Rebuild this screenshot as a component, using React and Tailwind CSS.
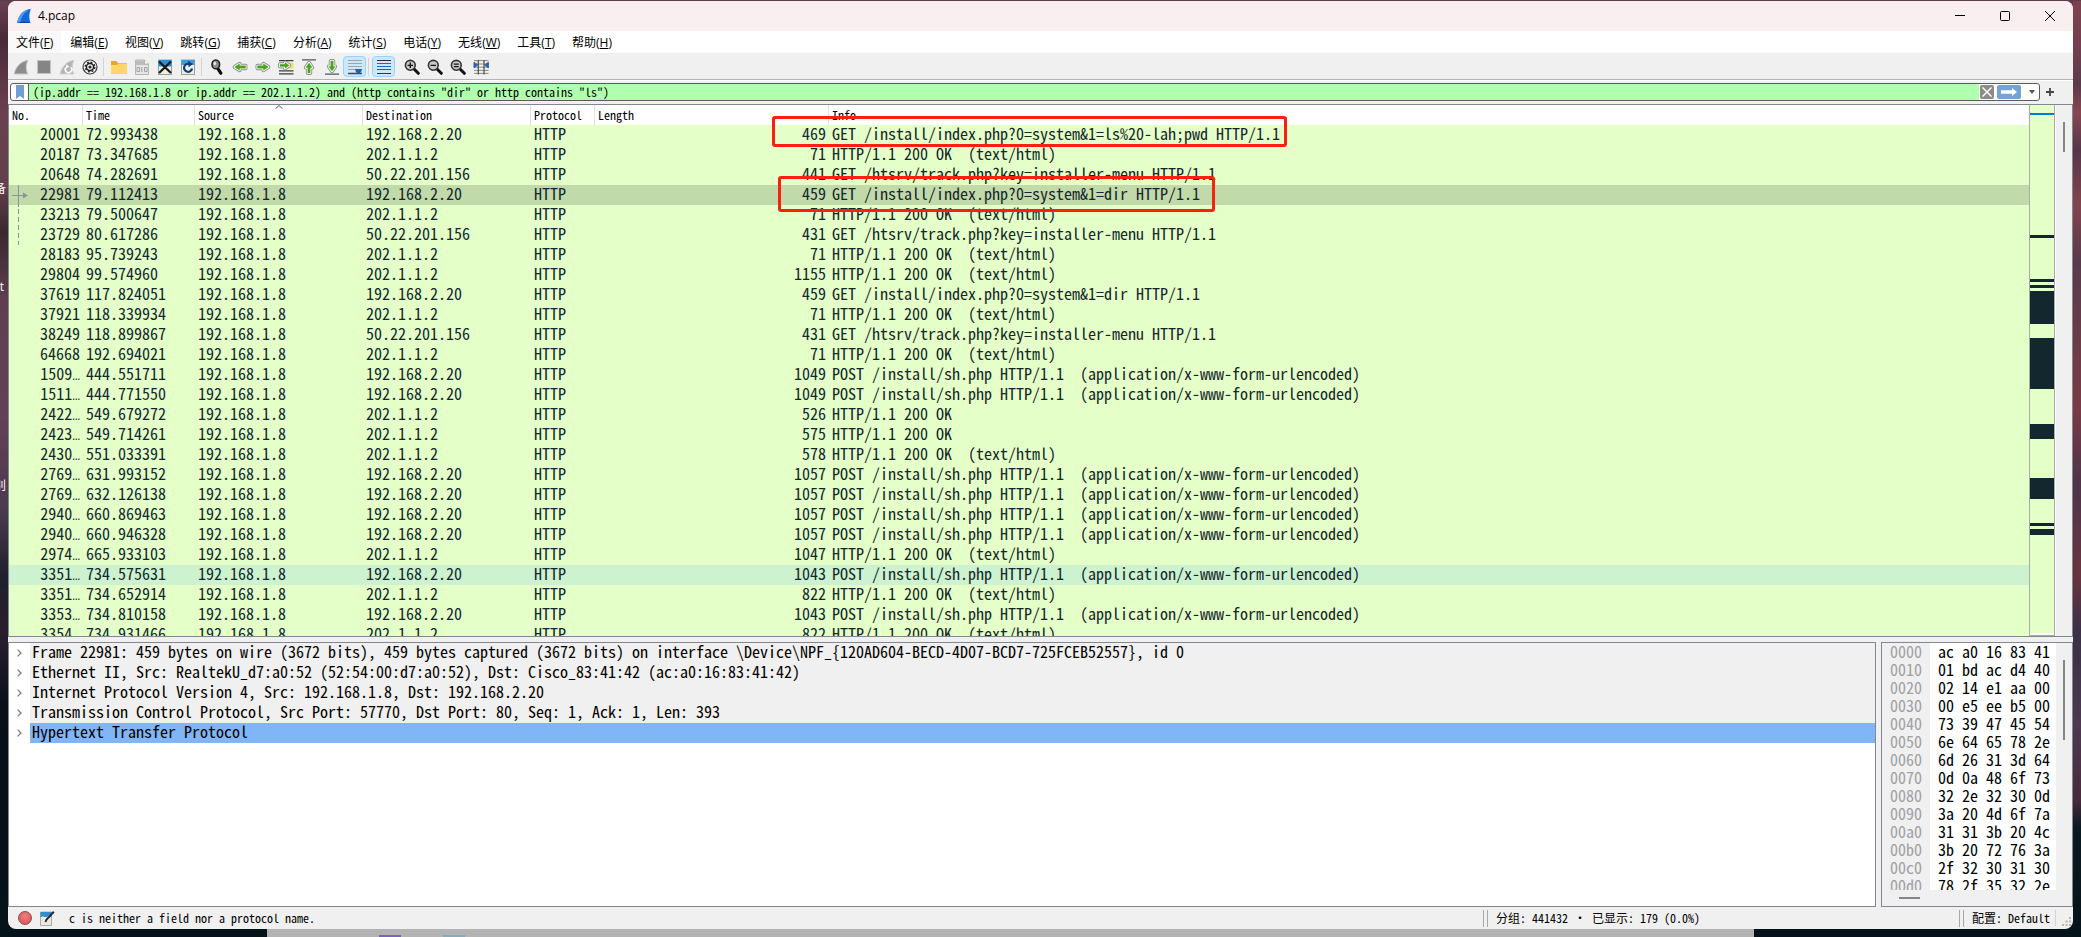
import React from 'react';

const packets = [
  ['20001', '72.993438', '192.168.2.20', '469', 'GET /install/index.php?0=system&1=ls%20-lah;pwd HTTP/1.1'],
  ['20187', '73.347685', '202.1.1.2', '71', 'HTTP/1.1 200 OK  (text/html)'],
  ['20648', '74.282691', '50.22.201.156', '441', 'GET /htsrv/track.php?key=installer-menu HTTP/1.1'],
  ['22981', '79.112413', '192.168.2.20', '459', 'GET /install/index.php?0=system&1=dir HTTP/1.1'],
  ['23213', '79.500647', '202.1.1.2', '71', 'HTTP/1.1 200 OK  (text/html)'],
  ['23729', '80.617286', '50.22.201.156', '431', 'GET /htsrv/track.php?key=installer-menu HTTP/1.1'],
  ['28183', '95.739243', '202.1.1.2', '71', 'HTTP/1.1 200 OK  (text/html)'],
  ['29804', '99.574960', '202.1.1.2', '1155', 'HTTP/1.1 200 OK  (text/html)'],
  ['37619', '117.824051', '192.168.2.20', '459', 'GET /install/index.php?0=system&1=dir HTTP/1.1'],
  ['37921', '118.339934', '202.1.1.2', '71', 'HTTP/1.1 200 OK  (text/html)'],
  ['38249', '118.899867', '50.22.201.156', '431', 'GET /htsrv/track.php?key=installer-menu HTTP/1.1'],
  ['64668', '192.694021', '202.1.1.2', '71', 'HTTP/1.1 200 OK  (text/html)'],
  ['1509…', '444.551711', '192.168.2.20', '1049', 'POST /install/sh.php HTTP/1.1  (application/x-www-form-urlencoded)'],
  ['1511…', '444.771550', '192.168.2.20', '1049', 'POST /install/sh.php HTTP/1.1  (application/x-www-form-urlencoded)'],
  ['2422…', '549.679272', '202.1.1.2', '526', 'HTTP/1.1 200 OK'],
  ['2423…', '549.714261', '202.1.1.2', '575', 'HTTP/1.1 200 OK'],
  ['2430…', '551.033391', '202.1.1.2', '578', 'HTTP/1.1 200 OK  (text/html)'],
  ['2769…', '631.993152', '192.168.2.20', '1057', 'POST /install/sh.php HTTP/1.1  (application/x-www-form-urlencoded)'],
  ['2769…', '632.126138', '192.168.2.20', '1057', 'POST /install/sh.php HTTP/1.1  (application/x-www-form-urlencoded)'],
  ['2940…', '660.869463', '192.168.2.20', '1057', 'POST /install/sh.php HTTP/1.1  (application/x-www-form-urlencoded)'],
  ['2940…', '660.946328', '192.168.2.20', '1057', 'POST /install/sh.php HTTP/1.1  (application/x-www-form-urlencoded)'],
  ['2974…', '665.933103', '202.1.1.2', '1047', 'HTTP/1.1 200 OK  (text/html)'],
  ['3351…', '734.575631', '192.168.2.20', '1043', 'POST /install/sh.php HTTP/1.1  (application/x-www-form-urlencoded)'],
  ['3351…', '734.652914', '202.1.1.2', '822', 'HTTP/1.1 200 OK  (text/html)'],
  ['3353…', '734.810158', '192.168.2.20', '1043', 'POST /install/sh.php HTTP/1.1  (application/x-www-form-urlencoded)'],
  ['3354…', '734.931466', '202.1.1.2', '822', 'HTTP/1.1 200 OK  (text/html)'],
];

const SELECTED = 3;
const HOVERED = 22;

const details = [
  'Frame 22981: 459 bytes on wire (3672 bits), 459 bytes captured (3672 bits) on interface \\Device\\NPF_{120AD604-BECD-4D07-BCD7-725FCEB52557}, id 0',
  'Ethernet II, Src: RealtekU_d7:a0:52 (52:54:00:d7:a0:52), Dst: Cisco_83:41:42 (ac:a0:16:83:41:42)',
  'Internet Protocol Version 4, Src: 192.168.1.8, Dst: 192.168.2.20',
  'Transmission Control Protocol, Src Port: 57770, Dst Port: 80, Seq: 1, Ack: 1, Len: 393',
  'Hypertext Transfer Protocol',
];

const hexRows = [
  ['0000', 'ac a0 16 83 41'],
  ['0010', '01 bd ac d4 40'],
  ['0020', '02 14 e1 aa 00'],
  ['0030', '00 e5 ee b5 00'],
  ['0040', '73 39 47 45 54'],
  ['0050', '6e 64 65 78 2e'],
  ['0060', '6d 26 31 3d 64'],
  ['0070', '0d 0a 48 6f 73'],
  ['0080', '32 2e 32 30 0d'],
  ['0090', '3a 20 4d 6f 7a'],
  ['00a0', '31 31 3b 20 4c'],
  ['00b0', '3b 20 72 76 3a'],
  ['00c0', '2f 32 30 31 30'],
  ['00d0', '78 2f 35 32 2e'],
];

const menus = [
  ['文件', 'F'],
  ['编辑', 'E'],
  ['视图', 'V'],
  ['跳转', 'G'],
  ['捕获', 'C'],
  ['分析', 'A'],
  ['统计', 'S'],
  ['电话', 'Y'],
  ['无线', 'W'],
  ['工具', 'T'],
  ['帮助', 'H'],
];

// [y, height] of the dark bands in the scroll minimap
const bands = [
  [130, 3], [174, 3], [180, 3], [186, 33], [233, 51], [319, 15], [373, 20], [417, 3], [423, 6],
];

function Icon({ children }) {
  return (
    <svg viewBox="0 0 16 16" className="w-4 h-4 shrink-0" fill="none" aria-hidden="true">
      {children}
    </svg>
  );
}

function Magnifier({ children }) {
  return (
    <Icon>
      <path d="M9.5 9.5 14.3 14.3" stroke="#111" strokeWidth="3" strokeLinecap="round" />
      <circle cx="6.3" cy="6.3" r="4.9" fill="#c9c9c9" stroke="#333" strokeWidth="1.6" />
      <g stroke="#111" strokeWidth="1.3">{children}</g>
    </Icon>
  );
}

const RIGHT_ARROW = 'M2.5 6.8H8.5V4.8L13.3 8 8.5 11.2V9.2H2.5Z';
const UP_ARROW = 'M6.8 14V8.6H4.8L8 4 11.2 8.6H9.2V14Z';

function GreenArrow({ d, transform }) {
  return (
    <g transform={transform} strokeLinejoin="round">
      <path d={d} stroke="#8b8b8b" strokeWidth="4" />
      <path d={d} stroke="#fff" strokeWidth="2.2" />
      <path d={d} fill="#47a51a" stroke="#47a51a" strokeWidth=".4" />
    </g>
  );
}

const tools = [
  {
    label: '开始捕获',
    icon: <Icon><path d="M1 15C3 8 7 2.5 15 1.2 12.6 5.5 12.8 11 14.8 15Z" fill="#8c8c8c" stroke="#c8c8c8" /></Icon>,
  },
  {
    label: '停止捕获',
    icon: <Icon><rect x="1.5" y="1.5" width="13" height="13" fill="#858585" stroke="#c3c3c3" /></Icon>,
  },
  {
    label: '重新开始',
    icon: (
      <Icon>
        <path d="M1 15C3 8 7 2.5 15 1.2 12.6 5.5 12.8 11 14.8 15Z" fill="#b3b3b3" stroke="#cfcfcf" />
        <path d="M11.8 8.2A3.2 3.2 0 1 1 7 8.4" stroke="#fff" strokeWidth="1.6" />
        <path d="M7.2 5.6 10.3 7.5 7 9.6Z" fill="#fff" />
      </Icon>
    ),
  },
  {
    label: '捕获选项',
    icon: (
      <Icon>
        <circle cx="8" cy="8" r="7" fill="#fff" stroke="#3c3c3c" strokeWidth="1.2" />
        <circle cx="8" cy="8" r="3.6" stroke="#222" strokeWidth="1.6" />
        <circle cx="8" cy="8" r="4.9" stroke="#222" strokeWidth="1.3" strokeDasharray="2 1.85" />
        <circle cx="8" cy="8" r="1.6" fill="#222" />
      </Icon>
    ),
  },
  'separator',
  {
    label: '打开',
    icon: (
      <Icon>
        <path d="M0 2H5.5L7 4H16V14.5H0Z" fill="#e9a91d" />
        <path d="M0 6H6L7.5 4.6H16V14.5H0Z" fill="#ffd667" />
      </Icon>
    ),
  },
  {
    label: '保存',
    icon: (
      <Icon>
        <path d="M1.5 1H10.5L14.5 5V15.5H1.5Z" fill="#e4e4e4" stroke="#b5b5b5" />
        <path d="M2 1.5H10L14 5V6H2Z" fill="#bcbcbc" />
        <path d="M10.5 1V5H14.5" fill="#fff" stroke="#b5b5b5" />
        <path d="M3 8.5H5.5V12.5H3ZM7.8 8V13M10.5 8.5H13V12.5H10.5Z" stroke="#a3a3a3" />
      </Icon>
    ),
  },
  {
    label: '关闭',
    icon: (
      <Icon>
        <rect x="1.5" y="1" width="13" height="14.5" fill="#eef0e6" stroke="#9d9d95" />
        <path d="M1.5 1H14.5V7.5H1.5Z" fill="#2e8fd0" />
        <path d="M2 2.5 14 14M14 2.5 2 14" stroke="#1b1b1b" strokeWidth="2.4" />
      </Icon>
    ),
  },
  {
    label: '重新加载',
    icon: (
      <Icon>
        <rect x="1.5" y="1" width="13" height="14.5" fill="#eef0e6" stroke="#9d9d95" />
        <path d="M1.5 1H14.5V6H1.5Z" fill="#3f9ad6" />
        <path d="M12 9.5A4 4 0 1 1 9 4.9" stroke="#123f7c" strokeWidth="2.2" />
        <path d="M8 1.8 13 5 8.6 8.2Z" fill="#123f7c" />
      </Icon>
    ),
  },
  'separator',
  {
    label: '查找',
    icon: (
      <Icon>
        <path d="M8.5 9 11.8 14.2" stroke="#0d0d0d" strokeWidth="3.2" strokeLinecap="round" />
        <ellipse cx="6.8" cy="5.4" rx="3.8" ry="4.4" fill="#8d8d8d" stroke="#1f1f1f" strokeWidth="1.6" />
        <ellipse cx="5.8" cy="4.4" rx="1.3" ry="1.8" fill="#e4e4e4" />
      </Icon>
    ),
  },
  { label: '后退', icon: <Icon><GreenArrow d={RIGHT_ARROW} transform="rotate(180 8 8)" /></Icon> },
  { label: '前进', icon: <Icon><GreenArrow d={RIGHT_ARROW} /></Icon> },
  {
    label: '转到分组',
    icon: (
      <Icon>
        <path d="M1 1.7H15.5M1 11.8H15.5M1 14.8H15.5" stroke="#3c3c3c" strokeWidth="1.3" />
        <path d="M8 5H15.5M8 8H15.5" stroke="#efe26a" strokeWidth="3" />
        <GreenArrow d="M2 5.3H7V3.5L11.2 6.4 7 9.3V7.5H2Z" />
      </Icon>
    ),
  },
  {
    label: '首个分组',
    icon: <Icon><path d="M1 .8H15" stroke="#555" strokeWidth="1.3" /><GreenArrow d={UP_ARROW} /></Icon>,
  },
  {
    label: '末个分组',
    icon: <Icon><path d="M1 15.2H15" stroke="#555" strokeWidth="1.3" /><GreenArrow d={UP_ARROW} transform="rotate(180 8 8)" /></Icon>,
  },
  {
    label: '自动滚动',
    active: true,
    icon: (
      <Icon>
        <path d="M1 1.5H15M1 4.5H15M1 7.5H15M1 10.5H15" stroke="#a5a5a0" strokeWidth="1.2" />
        <path d="M1 14.5H15" stroke="#444" strokeWidth="1.3" />
        <path d="M8 10H15L14 13.2 11.5 14.8 9 13.2Z" fill="#2c5f9e" />
      </Icon>
    ),
  },
  'separator',
  {
    label: '着色',
    active: true,
    icon: (
      <Icon>
        <path d="M1 1.5H15" stroke="#333" strokeWidth="1.2" />
        <path d="M1 4.5H15" stroke="#ec1c24" strokeWidth="1.2" />
        <path d="M1 7.5H15" stroke="#2d62b8" strokeWidth="1.2" />
        <path d="M1 10.5H15" stroke="#6d3d8c" strokeWidth="1.2" />
        <path d="M1 14.5H15" stroke="#333" strokeWidth="1.2" />
      </Icon>
    ),
  },
  'gap',
  { label: '放大', icon: <Magnifier><path d="M3.6 6.3H9M6.3 3.6V9" /></Magnifier> },
  { label: '缩小', icon: <Magnifier><path d="M3.6 6.3H9" /></Magnifier> },
  { label: '正常大小', icon: <Magnifier><path d="M3.8 5.1H8.8M3.8 7.6H8.8" /></Magnifier> },
  {
    label: '调整列宽',
    icon: (
      <Icon>
        <path d="M1 1.6H15.5M1 5H15.5M1 8.2H15.5M1 11.4H15.5M1 14.4H15.5" stroke="#8b8b85" />
        <path d="M5.3 1V15.5M11 1V15.5" stroke="#4c4c48" strokeWidth="1.2" />
        <path d="M1 3.2 4.8 6 1 8.8ZM15.4 3.2 11.6 6 15.4 8.8Z" fill="#2f62a8" stroke="#2f62a8" />
      </Icon>
    ),
  },
];

function TitleBar() {
  return (
    <header className="h-[30px] shrink-0 bg-[#f9eff1] flex items-center">
      <svg viewBox="0 0 16 16" className="w-4 h-4 ml-2" aria-hidden="true">
        <path d="M1 15C2.5 8 6 2 15 .8 12.8 5.5 13 11 14.6 15Z" fill="#1668d8" />
        <path d="M1 15C2.5 8 6 2 15 .8 8 4 5 9 4.5 15Z" fill="#4d9bf5" />
        <path d="M1 15Q8 12.6 14.6 15Z" fill="#0b3f9c" />
      </svg>
      <h1 className="ml-1.5 flex-1 font-['Open_Sans',sans-serif] text-xs">4.pcap</h1>
      <div className="flex pr-px">
        <button aria-label="最小化" className="w-[45px] h-[30px] flex items-center justify-center">
          <svg viewBox="0 0 10 10" className="w-2.5 h-2.5" stroke="#000"><path d="M0 4.5H10" /></svg>
        </button>
        <button aria-label="最大化" className="w-[45px] h-[30px] flex items-center justify-center">
          <svg viewBox="0 0 10 10" className="w-2.5 h-2.5" fill="none" stroke="#000"><rect x=".5" y=".5" width="9" height="9" rx="1" /></svg>
        </button>
        <button aria-label="关闭窗口" className="w-[45px] h-[30px] flex items-center justify-center">
          <svg viewBox="0 0 10 10" className="w-2.5 h-2.5" stroke="#000"><path d="M0 0 10 10M10 0 0 10" /></svg>
        </button>
      </div>
    </header>
  );
}

function MenuBar() {
  return (
    <nav className="h-[22px] shrink-0 bg-white flex gap-px font-['Open_Sans','Noto_Sans_CJK_SC',sans-serif] text-xs">
      {menus.map(([name, key], i) => (
        <button key={key} className={`px-2 pt-0.5 h-full whitespace-nowrap ${i === 0 ? 'bg-[#f9f9f9]' : ''}`}>
          {name}(<span className="underline">{key}</span>)
        </button>
      ))}
    </nav>
  );
}

function Toolbar() {
  return (
    <div className="h-[27px] shrink-0 flex items-center pl-px border-t border-b border-t-[#eeeeee] border-b-[#b4b4b4]">
      {tools.map((tool, i) => {
        if (tool === 'separator') return <span key={i} className="w-px h-[18px] ml-0.5 mr-[3px] bg-[#d3d3d3]" />;
        if (tool === 'gap') return <span key={i} className="w-[5px]" />;
        return (
          <button
            key={i}
            aria-label={tool.label}
            className={`w-[23px] h-[21px] flex items-center justify-center rounded-sm ${tool.active ? 'bg-[#cce8ff] border border-[#99d1ff]' : ''}`}
          >
            {tool.icon}
          </button>
        );
      })}
    </div>
  );
}

function FilterBar() {
  return (
    <div className="h-6 shrink-0 flex items-center border-t border-white pl-0.5 pb-px">
      <div className="flex-1 h-[18px] flex items-center bg-white border border-[#5c5c5c] rounded-[3px] overflow-hidden">
        <button aria-label="书签" className="w-[18px] h-full flex items-center justify-center border-r border-[#5c5c5c]">
          <svg viewBox="0 0 8 14" className="w-2 h-3.5"><path d="M0 0H8V14L4 11 0 14Z" fill="#719fd3" /></svg>
        </button>
        <input
          aria-label="显示过滤器"
          className="flex-1 min-w-0 h-full pl-1 pb-px bg-[#afffaf] text-black outline-none font-['Noto_Sans_Mono_CJK_SC','Liberation_Mono',monospace] text-xs"
          defaultValue={'(ip.addr == 192.168.1.8 or ip.addr == 202.1.1.2) and (http contains "dir" or http contains "ls")'}
        />
        <button aria-label="清除" className="ml-px w-3.5 h-3.5 bg-[#8a8c88] rounded-xs flex items-center justify-center">
          <svg viewBox="0 0 10 10" className="w-2.5 h-2.5" stroke="#fff" strokeWidth="1.5"><path d="M.5 .5 9.5 9.5M9.5 .5 .5 9.5" /></svg>
        </button>
        <button aria-label="应用" className="ml-[3px] w-6 h-3.5 bg-[#75a3d5] rounded-xs flex items-center justify-center">
          <svg viewBox="0 0 16 8" className="w-4 h-2"><path d="M0 2.2H11V0L16 4 11 8V5.8H0Z" fill="#fff" /></svg>
        </button>
        <button aria-label="历史" className="w-[18px] h-full flex items-center justify-center pl-1">
          <svg viewBox="0 0 6 4" className="w-1.5 h-1"><path d="M0 0H6L3 4Z" fill="#555" /></svg>
        </button>
      </div>
      <button aria-label="添加过滤器按钮" className="w-[33px] h-full flex items-center pl-1.5">
        <svg viewBox="0 0 8 8" className="w-2 h-2" stroke="#444" strokeWidth="1.8"><path d="M0 4H8M4 0V8" /></svg>
      </button>
    </div>
  );
}

function HeaderCell({ children, sorted }) {
  return (
    <th className="relative h-5 px-[3px] text-left font-normal border-r border-[#e2e2e2] last:border-r-0">
      {sorted && (
        <svg viewBox="0 0 8 4" className="absolute top-0 left-1/2 -ml-1 w-2 h-1" fill="none" stroke="#555"><path d="M.5 3.8 4 .5 7.5 3.8" /></svg>
      )}
      {children}
    </th>
  );
}

function PacketNumber({ value }) {
  if (!value.endsWith('…')) return value;
  return (
    <>
      {value.slice(0, -1)}
      <span className="font-['Liberation_Mono',monospace] text-[13px] leading-0">…</span>
    </>
  );
}

function PacketList() {
  return (
    <section className="flex-[2] min-h-0 flex border border-[#828790] bg-[#e4ffc7]">
      <div className="relative flex-1 min-w-0 overflow-hidden">
        <table className="w-full table-fixed border-separate border-spacing-0 text-[#12272e]">
          <colgroup>
            <col className="w-[74px]" />
            <col className="w-28" />
            <col className="w-[168px]" />
            <col className="w-[168px]" />
            <col className="w-16" />
            <col className="w-[234px]" />
            <col />
          </colgroup>
          <thead className="bg-white text-black font-['Noto_Sans_Mono_CJK_SC','Liberation_Mono',monospace] text-xs">
            <tr>
              <HeaderCell>No.</HeaderCell>
              <HeaderCell>Time</HeaderCell>
              <HeaderCell sorted>Source</HeaderCell>
              <HeaderCell>Destination</HeaderCell>
              <HeaderCell>Protocol</HeaderCell>
              <HeaderCell>Length</HeaderCell>
              <HeaderCell>Info</HeaderCell>
            </tr>
          </thead>
          <tbody className="font-['Noto_Sans_Mono_CJK_SC','Liberation_Mono',monospace] text-base leading-4 whitespace-pre">
            {packets.map(([no, time, destination, length, info], i) => (
              <tr key={i} className={i === SELECTED ? 'bg-[#c2d9a9]' : i === HOVERED ? 'bg-[#cdf2cf]' : ''}>
                <td className="relative h-5 px-[3px] pb-1 text-right">
                  {i === SELECTED && (
                    <svg viewBox="0 0 20 60" className="absolute top-0 left-0 w-5 h-[60px]" fill="none" stroke="#8a949c">
                      <path d="M9.5 0V22M3 10.5H15" />
                      <path d="M9.5 24V60" strokeDasharray="5 3" />
                      <path d="M14 7.5 19 10.5 14 13.5Z" fill="#8a949c" stroke="none" />
                    </svg>
                  )}
                  <PacketNumber value={no} />
                </td>
                <td className="h-5 px-[3px] pb-1">{time}</td>
                <td className="h-5 px-[3px] pb-1">192.168.1.8</td>
                <td className="h-5 px-[3px] pb-1">{destination}</td>
                <td className="h-5 px-[3px] pb-1">HTTP</td>
                <td className="h-5 px-[3px] pb-1 text-right">{length}</td>
                <td className="h-5 px-[3px] pb-1">{info}</td>
              </tr>
            ))}
          </tbody>
        </table>
        {/* Highlight marks over the two interesting requests */}
        <div className="absolute left-[763px] top-[11px] w-[515px] h-[31px] border-3 border-[#ff1f10] rounded-[3px]" />
        <div className="absolute left-[769px] top-[71px] w-[437px] h-9 border-3 border-[#ff1f10] rounded-[3px]" />
      </div>
      <div className="w-[26px] border-x border-b border-[#a9a9a9] bg-white pb-0.5">
        <svg viewBox="0 0 24 527" preserveAspectRatio="none" className="block w-full h-full" shapeRendering="crispEdges">
          <rect width="24" height="527" fill="#e4ffc7" />
          <rect y="8" width="24" height="2" fill="#0078d7" />
          {bands.map(([y, h]) => (
            <rect key={y} y={y} width="24" height={h} fill="#12272e" />
          ))}
        </svg>
      </div>
      <div className="w-[17px] bg-[#f0f0f0] border-l border-white pt-[17px] pl-[7px]">
        <div className="w-0.5 h-[30px] bg-[#868686]" />
      </div>
    </section>
  );
}

function PacketDetails() {
  return (
    <section className="flex-1 min-w-0 bg-white border border-[#828790] overflow-hidden">
      <ul className="font-['Noto_Sans_Mono_CJK_SC','Liberation_Mono',monospace] text-base leading-4">
        {details.map((line, i) => (
          <li key={line} className="flex h-5">
            <button aria-label="展开" className="w-[21px] shrink-0 flex items-center justify-center">
              <svg viewBox="0 0 5 8" className="w-[5px] h-2" fill="none" stroke="#7a7a7a" strokeWidth="1.3"><path d="M.6 .6 4 4 .6 7.4" /></svg>
            </button>
            <span className={`flex-1 pl-0.5 pb-1 text-black whitespace-pre ${i === 4 ? 'bg-[#80b6f8]' : 'bg-[#f0f0f0]'}`}>
              {line}
            </span>
          </li>
        ))}
      </ul>
    </section>
  );
}

function PacketBytes() {
  return (
    <section className="w-48 shrink-0 flex flex-col bg-[#f0f0f0] border border-[#828790]">
      <div className="flex-1 min-h-0 flex">
        <div className="flex-1 overflow-hidden bg-[linear-gradient(to_right,#f0f0f0_48px,#ffffff_48px)]">
          <table className="font-['Noto_Sans_Mono_CJK_SC','Liberation_Mono',monospace] text-base leading-4">
            <tbody>
              {hexRows.map(([offset, bytes]) => (
                <tr key={offset}>
                  <td className="w-12 pl-2 pb-0.5 text-[#a0a0a0]">{offset}</td>
                  <td className="pl-2 pb-0.5 text-black whitespace-nowrap">{bytes}</td>
                </tr>
              ))}
            </tbody>
          </table>
        </div>
        <div className="w-4 pt-[17px] pl-[7px]">
          <div className="w-0.5 h-20 bg-[#868686]" />
        </div>
      </div>
      <div className="h-4 shrink-0 pt-[7px] pl-[17px]">
        <div className="w-[21px] h-0.5 bg-[#868686]" />
      </div>
    </section>
  );
}

function Handle() {
  return <span className="w-[5px] h-[17px] shrink-0 border-x border-[#a8a8a8]" />;
}

function StatusBar() {
  return (
    <footer className="h-[22px] shrink-0 flex items-center text-black font-['Noto_Sans_Mono_CJK_SC','Liberation_Mono',monospace] text-xs whitespace-pre">
      <button aria-label="专家信息" className="ml-2.5 w-3.5 h-3.5 rounded-full border border-[#8f4a4a] bg-[radial-gradient(circle_at_50%_35%,#f08080,#d84a50)]" />
      <button aria-label="捕获文件注释" className="ml-2">
        <svg viewBox="0 0 15 15" className="w-[15px] h-[15px]" fill="none">
          <path d="M.5 1H11.5V14.5H.5Z" fill="#e9e9e2" stroke="#aaa" />
          <path d="M.5 1H11.5V6H.5Z" fill="#2e8fd0" />
          <path d="M2.5 5.5 6 8 9 4.5" stroke="#fff" />
          <path d="M13.8 .8 6.5 8.5 5.5 11" stroke="#2b2b2b" strokeWidth="2" />
        </svg>
      </button>
      <span className="ml-3.5 flex-1">c is neither a field nor a protocol name.</span>
      <div className="w-[476px] flex items-center">
        <Handle />
        <span className="ml-2">分组: 441432 · 已显示: 179 (0.0%)</span>
      </div>
      <Handle />
      <span className="ml-2 pr-[5px] border-r border-[#d3d3d3]">配置: Default</span>
      <svg viewBox="0 0 9 9" className="ml-1.5 mr-0.5 mt-1.5 w-[9px] h-[9px]" fill="#b5b5b5">
        <path d="M7 0H9V2H7ZM7 3.5H9V5.5H7ZM3.5 3.5H5.5V5.5H3.5ZM7 7H9V9H7ZM3.5 7H5.5V9H3.5ZM0 7H2V9H0Z" />
      </svg>
    </footer>
  );
}

export default function App() {
  return (
    <div className="h-screen flex flex-col overflow-hidden bg-[#5a3a48]">
      <div className="flex-1 min-h-0 flex pt-px bg-[linear-gradient(to_bottom,#5f3c4c_0%,#5e3c4a_40%,#0c1620_80%,#07121a_100%)]">
        {/* Desktop wallpaper with icon captions peeking out on the left */}
        <div className="relative w-2 shrink-0 overflow-hidden text-white text-xs leading-4 font-['Open_Sans','Noto_Sans_CJK_SC',sans-serif] bg-[linear-gradient(to_bottom,#6b4152_0%,#4a2a38_4%,#6a4050_12%,#62404e_20%,#3a2830_25%,#5e3e50_32%,#64405a_45%,#4a3a50_55%,#20202e_62%,#2a1e30_68%,#0a0f18_76%,#07121a_100%)]">
          <span className="absolute right-0.5 top-[180px]">备</span>
          <span className="absolute right-1 top-[278px]">t</span>
          <span className="absolute right-0.5 top-[477px]">别</span>
        </div>
        <div className="flex-1 min-w-0 flex flex-col bg-[#f0f0f0] rounded-lg overflow-hidden text-black">
          <TitleBar />
          <MenuBar />
          <Toolbar />
          <FilterBar />
          <main className="flex-1 min-h-0 flex flex-col gap-[5px]">
            <PacketList />
            <div className="flex-1 min-h-0 flex gap-[5px]">
              <PacketDetails />
              <PacketBytes />
            </div>
          </main>
          <StatusBar />
        </div>
        <div className="w-2 shrink-0 bg-[linear-gradient(to_bottom,#80414f_0%,#743f50_5%,#5a3a4c_9%,#8a4650_12%,#56364a_16%,#84444e_22%,#583a4c_28%,#6e3c48_38%,#7a3a46_44%,#4e344a_52%,#6a3440_62%,#3a3048_68%,#4a3a52_78%,#4a2a3c_86%,#0a1a22_89%,#07121a_100%)]" />
      </div>
      <div className="h-2 shrink-0 flex bg-[#04121a]">
        <div className="w-[267px]" />
        <div className="flex-1 flex items-end bg-[#b3b3b3]">
          <span className="ml-28 w-[22px] h-0.5 bg-[#7b62c0]" />
          <span className="ml-[42px] w-[22px] h-0.5 bg-[#82aebb]" />
        </div>
        <div className="w-[327px]" />
      </div>
    </div>
  );
}
